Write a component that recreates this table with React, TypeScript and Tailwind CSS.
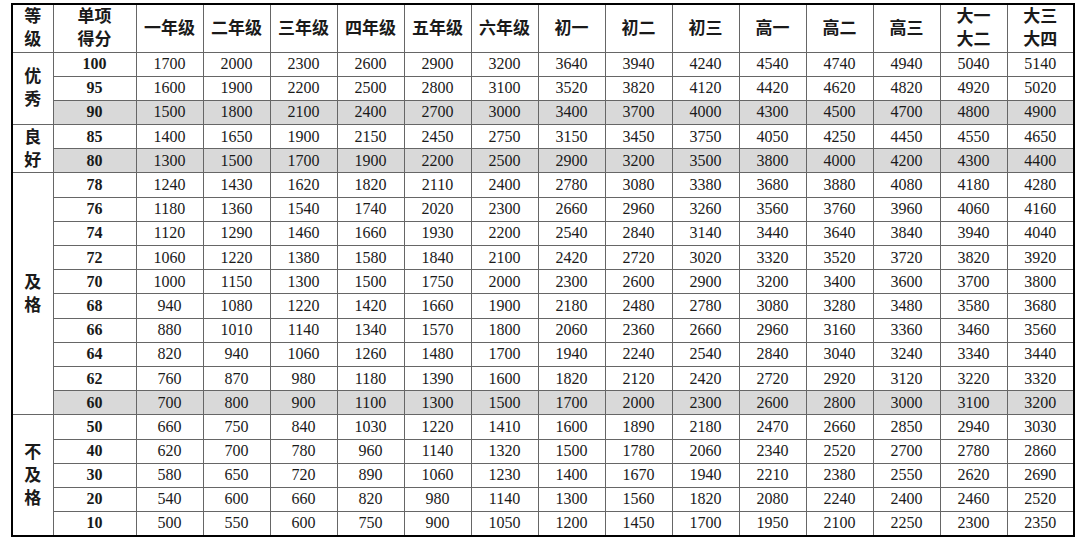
import React from "react";

const headers = [
  "一年级",
  "二年级",
  "三年级",
  "四年级",
  "五年级",
  "六年级",
  "初一",
  "初二",
  "初三",
  "高一",
  "高二",
  "高三",
];

interface IGroup {
  grade: string[];
  rows: { score: number; values: number[]; shaded?: boolean }[];
}

const groups: IGroup[] = [
  {
    grade: ["优", "秀"],
    rows: [
      { score: 100, values: [1700, 2000, 2300, 2600, 2900, 3200, 3640, 3940, 4240, 4540, 4740, 4940, 5040, 5140] },
      { score: 95, values: [1600, 1900, 2200, 2500, 2800, 3100, 3520, 3820, 4120, 4420, 4620, 4820, 4920, 5020] },
      { score: 90, shaded: true, values: [1500, 1800, 2100, 2400, 2700, 3000, 3400, 3700, 4000, 4300, 4500, 4700, 4800, 4900] },
    ],
  },
  {
    grade: ["良", "好"],
    rows: [
      { score: 85, values: [1400, 1650, 1900, 2150, 2450, 2750, 3150, 3450, 3750, 4050, 4250, 4450, 4550, 4650] },
      { score: 80, shaded: true, values: [1300, 1500, 1700, 1900, 2200, 2500, 2900, 3200, 3500, 3800, 4000, 4200, 4300, 4400] },
    ],
  },
  {
    grade: ["及", "格"],
    rows: [
      { score: 78, values: [1240, 1430, 1620, 1820, 2110, 2400, 2780, 3080, 3380, 3680, 3880, 4080, 4180, 4280] },
      { score: 76, values: [1180, 1360, 1540, 1740, 2020, 2300, 2660, 2960, 3260, 3560, 3760, 3960, 4060, 4160] },
      { score: 74, values: [1120, 1290, 1460, 1660, 1930, 2200, 2540, 2840, 3140, 3440, 3640, 3840, 3940, 4040] },
      { score: 72, values: [1060, 1220, 1380, 1580, 1840, 2100, 2420, 2720, 3020, 3320, 3520, 3720, 3820, 3920] },
      { score: 70, values: [1000, 1150, 1300, 1500, 1750, 2000, 2300, 2600, 2900, 3200, 3400, 3600, 3700, 3800] },
      { score: 68, values: [940, 1080, 1220, 1420, 1660, 1900, 2180, 2480, 2780, 3080, 3280, 3480, 3580, 3680] },
      { score: 66, values: [880, 1010, 1140, 1340, 1570, 1800, 2060, 2360, 2660, 2960, 3160, 3360, 3460, 3560] },
      { score: 64, values: [820, 940, 1060, 1260, 1480, 1700, 1940, 2240, 2540, 2840, 3040, 3240, 3340, 3440] },
      { score: 62, values: [760, 870, 980, 1180, 1390, 1600, 1820, 2120, 2420, 2720, 2920, 3120, 3220, 3320] },
      { score: 60, shaded: true, values: [700, 800, 900, 1100, 1300, 1500, 1700, 2000, 2300, 2600, 2800, 3000, 3100, 3200] },
    ],
  },
  {
    grade: ["不", "及", "格"],
    rows: [
      { score: 50, values: [660, 750, 840, 1030, 1220, 1410, 1600, 1890, 2180, 2470, 2660, 2850, 2940, 3030] },
      { score: 40, values: [620, 700, 780, 960, 1140, 1320, 1500, 1780, 2060, 2340, 2520, 2700, 2780, 2860] },
      { score: 30, values: [580, 650, 720, 890, 1060, 1230, 1400, 1670, 1940, 2210, 2380, 2550, 2620, 2690] },
      { score: 20, values: [540, 600, 660, 820, 980, 1140, 1300, 1560, 1820, 2080, 2240, 2400, 2460, 2520] },
      { score: 10, values: [500, 550, 600, 750, 900, 1050, 1200, 1450, 1700, 1950, 2100, 2250, 2300, 2350] },
    ],
  },
];

const cjk = "font-['Liberation_Serif','Noto_Sans_CJK_SC',serif]";
const cell = "border border-[#666] text-center align-middle p-0";

const App: React.FC = () => {
  return (
    <div className="w-[1080px] h-[546px] bg-white pl-[11px] pt-[3px]">
      <table className="table-fixed border-collapse border-2 border-black w-[1062px] text-[#1a1a1a]">
        <colgroup>
          <col className="w-[41px]" />
          <col className="w-[83px]" />
          {Array.from({ length: 14 }).map((_, i) => (
            <col key={i} className="w-[67px]" />
          ))}
        </colgroup>
        <thead>
          {/* header row */}
          <tr className={`h-[48px] ${cjk} font-bold text-[17px] leading-[23px]`}>
            <th className={cell}>
              等<br />级
            </th>
            <th className={cell}>
              单项<br />得分
            </th>
            {headers.map((h) => (
              <th key={h} className={cell}>
                {h}
              </th>
            ))}
            <th className={cell}>
              大一<br />大二
            </th>
            <th className={cell}>
              大三<br />大四
            </th>
          </tr>
        </thead>
        <tbody className="font-['Liberation_Serif',serif] text-[16px] leading-none">
          {groups.map((g) =>
            g.rows.map((r, ri) => (
              <tr key={r.score} className="h-[24.2px]">
                {ri === 0 && (
                  <td
                    rowSpan={g.rows.length}
                    className={`${cell} ${cjk} font-bold text-[17px] leading-[23px]`}
                  >
                    {g.grade.map((c, ci) => (
                      <div key={ci}>{c}</div>
                    ))}
                  </td>
                )}
                <td className={`${cell} font-bold ${r.shaded ? "bg-[#d9d9d9]" : ""}`}>
                  {r.score}
                </td>
                {r.values.map((v, vi) => (
                  <td key={vi} className={`${cell} ${r.shaded ? "bg-[#d9d9d9]" : ""}`}>
                    {v}
                  </td>
                ))}
              </tr>
            ))
          )}
        </tbody>
      </table>
    </div>
  );
};

export default App;
